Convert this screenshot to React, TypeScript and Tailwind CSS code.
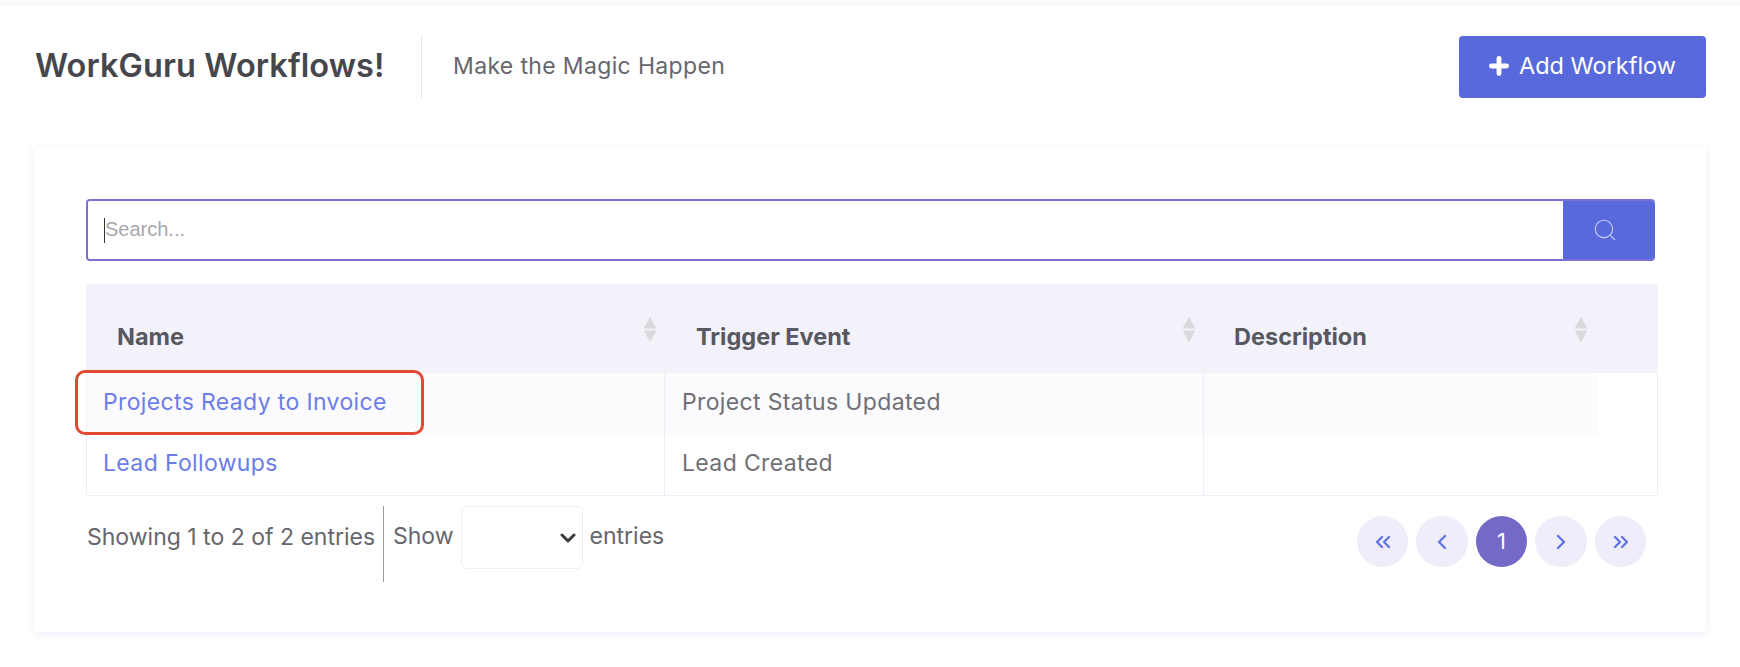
import React from "react";
import { ChevronLeft, ChevronRight, ChevronsLeft, ChevronsRight, Search, Plus } from "lucide-react";

const font = "font-['Inter','Liberation_Sans',sans-serif]";

function SortArrows() {
  return (
    <svg width="14" height="25" viewBox="0 0 14 25" className="shrink-0">
      <path d="M7 0 L13.5 11.5 H0.5 Z" fill="#d9d9dc" />
      <path d="M7 25 L13.5 13.5 H0.5 Z" fill="#d9d9dc" />
    </svg>
  );
}

function HeadCell({ label, w, pr, pl }: { label: string; w: string; pr: string; pl: string }) {
  return (
    <div className={`${w} ${pr} ${pl} flex justify-between pt-[33px]`}>
      <span className="text-[23.5px] font-bold leading-[42px] -mt-[1px] text-[#58585f]">{label}</span>
      <SortArrows />
    </div>
  );
}

function PageBtn({ children, active, w }: { children: React.ReactNode; active?: boolean; w: string }) {
  return (
    <div
      className={`${w} h-[51px] rounded-full flex items-center justify-center ${
        active ? "bg-[#7369c6] text-white" : "bg-[#eeedf9] text-[#6375e4]"
      }`}
    >
      {children}
    </div>
  );
}

export default function App() {
  return (
    <div className={`${font} w-[1740px] h-[667px] bg-white overflow-hidden`}>
      <div className="h-[6px] bg-[#fafafc]" />
      <div className="mt-[30px] h-[62px] pl-[35px] pr-[34px] flex items-center">
        <h1 className="w-[387px] h-full border-r border-[#e6e6ea] flex items-center text-[32.5px] font-semibold text-[#46464d] -mt-[1px] tracking-[0.1px]">
          WorkGuru Workflows!
        </h1>
        <span className="ml-[31px] text-[23px] -mt-[2px] text-[#66666c] tracking-[0.35px]">Make the Magic Happen</span>
        <button className="ml-auto w-[247px] h-[62px] rounded-[4px] bg-[#5869dc] text-white text-[23.5px] flex items-center justify-center gap-[7px] -mt-0">
          <Plus size={26} strokeWidth={4.5} className="-ml-[3px] -mt-[3px]" />
          <span className="-mt-[2px]">Add Workflow</span>
        </button>
      </div>

      <div className="ml-[34px] mt-[49px] w-[1672px] h-[485px] bg-white pt-[52px] pl-[52px] shadow-[0_2px_8px_rgba(90,80,200,0.10)]">
        <div className="w-[1569px] h-[62px] flex rounded-[4px] overflow-hidden border-2 border-[#7b70d3] border-r-0">
          <div className="flex-1 flex items-center pl-[16px] bg-white">
            <span className="w-px h-[25px] bg-[#333]" />
            <input
              placeholder="Search..."
              className="flex-1 outline-none text-[20px] -mt-[2px] font-['Liberation_Sans',sans-serif] placeholder:text-[#a8a8ae]"
            />
          </div>
          <div className="w-[92px] -my-[2px] bg-[#5869dc] flex items-center justify-center pr-[9px]">
            <Search size={26} strokeWidth={1} color="#c9d0f5" />
          </div>
        </div>

        <div className="mt-[23px] w-[1572px]">
          <div className="flex h-[89px] bg-[#f3f2fb]">
            <HeadCell label="Name" w="w-[579px]" pl="pl-[31px]" pr="pr-[8px]" />
            <HeadCell label="Trigger Event" w="w-[538px]" pl="pl-[31px]" pr="pr-[7px]" />
            <HeadCell label="Description" w="w-[455px]" pl="pl-[31px]" pr="pr-[70px]" />
          </div>
          <div className="border-x border-b border-[#eeedf8] text-[23px] tracking-[0.36px] text-[#6f6f75]">
            <div className="flex h-[61px] items-stretch">
              <div className="w-[578px] bg-[#fbfbfe] pl-[16px] pb-[3px] flex items-center text-[#6c7de8] border-r border-[#eeedf8]">
                Projects Ready to Invoice
              </div>
              <div className="w-[539px] bg-[#fbfbfe] pl-[17px] pb-[3px] flex items-center border-r border-[#eeedf8]">
                Project Status Updated
              </div>
              <div className="w-[393px] bg-[#fbfbfe]" />
            </div>
            <div className="flex h-[61px] items-stretch">
              <div className="w-[578px] pl-[16px] pb-[3px] flex items-center text-[#6c7de8] border-r border-[#eeedf8]">
                Lead Followups
              </div>
              <div className="w-[539px] pl-[17px] pb-[3px] flex items-center border-r border-[#eeedf8]">Lead Created</div>
            </div>
          </div>
        </div>

        <div className="w-[1572px] flex pl-[1px] pr-[12px] mt-[10px] h-[76px] text-[23px] text-[#66666c]">
          <div className="w-[297px] h-full flex items-center border-r border-[#9a9aa0] pb-[14px]">
            Showing 1 to 2 of 2 entries
          </div>
          <div className="flex items-start gap-[7px] pl-[9px]">
            <span className="leading-[60px]">Show</span>
            <div className="w-[122px] h-[63px] rounded-[6px] border border-[#eeeef4] flex items-center justify-end pr-[6px] text-[#3a3a40]">
              <svg width="16" height="10" viewBox="0 0 16 10" fill="none" stroke="currentColor" strokeWidth="3" strokeLinecap="round" strokeLinejoin="round">
                <path d="M2 2 L8 8 L14 2" />
              </svg>
            </div>
            <span className="leading-[60px]">entries</span>
          </div>
          <div className="ml-auto flex gap-[8px] pt-[10px]">
            <PageBtn w="w-[51px]"><ChevronsLeft size={24} strokeWidth={2.4} /></PageBtn>
            <PageBtn w="w-[52px]"><ChevronLeft size={24} strokeWidth={2.4} /></PageBtn>
            <PageBtn w="w-[51px]" active><span className="text-[22px]">1</span></PageBtn>
            <PageBtn w="w-[52px]"><ChevronRight size={24} strokeWidth={2.4} /></PageBtn>
            <PageBtn w="w-[51px]"><ChevronsRight size={24} strokeWidth={2.4} /></PageBtn>
          </div>
        </div>
      </div>

      <div className="fixed left-[75px] top-[370px] w-[349px] h-[65px] rounded-[10px] border-[3px] border-[#e04a33]" />
    </div>
  );
}
